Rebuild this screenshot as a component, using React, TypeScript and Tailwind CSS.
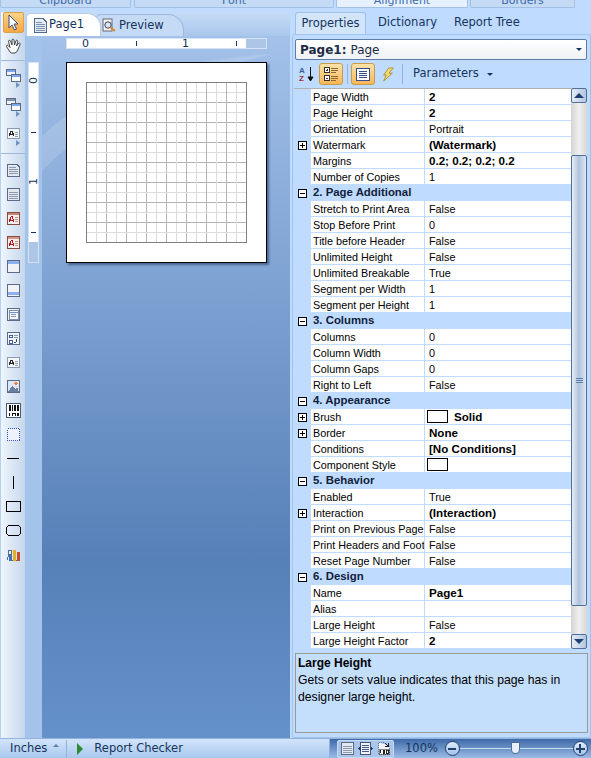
import React from 'react';

type Row =
  | { group: string }
  | { name: string; value?: string; bold?: boolean; plus?: boolean; swatch?: boolean };

const rows: Row[] = [
  { name: 'Page Width', value: '2', bold: true },
  { name: 'Page Height', value: '2', bold: true },
  { name: 'Orientation', value: 'Portrait' },
  { name: 'Watermark', value: '(Watermark)', bold: true, plus: true },
  { name: 'Margins', value: '0.2; 0.2; 0.2; 0.2', bold: true },
  { name: 'Number of Copies', value: '1' },
  { group: '2. Page Additional' },
  { name: 'Stretch to Print Area', value: 'False' },
  { name: 'Stop Before Print', value: '0' },
  { name: 'Title before Header', value: 'False' },
  { name: 'Unlimited Height', value: 'False' },
  { name: 'Unlimited Breakable', value: 'True' },
  { name: 'Segment per Width', value: '1' },
  { name: 'Segment per Height', value: '1' },
  { group: '3. Columns' },
  { name: 'Columns', value: '0' },
  { name: 'Column Width', value: '0' },
  { name: 'Column Gaps', value: '0' },
  { name: 'Right to Left', value: 'False' },
  { group: '4. Appearance' },
  { name: 'Brush', value: 'Solid', bold: true, plus: true, swatch: true },
  { name: 'Border', value: 'None', bold: true, plus: true },
  { name: 'Conditions', value: '[No Conditions]', bold: true },
  { name: 'Component Style', swatch: true },
  { group: '5. Behavior' },
  { name: 'Enabled', value: 'True' },
  { name: 'Interaction', value: '(Interaction)', bold: true, plus: true },
  { name: 'Print on Previous Page', value: 'False' },
  { name: 'Print Headers and Foot', value: 'False' },
  { name: 'Reset Page Number', value: 'False' },
  { group: '6. Design' },
  { name: 'Name', value: 'Page1', bold: true },
  { name: 'Alias' },
  { name: 'Large Height', value: 'False' },
  { name: 'Large Height Factor', value: '2', bold: true },
];

function Box({ minus }: { minus?: boolean }) {
  return (
    <svg width="9" height="9" viewBox="0 0 9 9" shapeRendering="crispEdges">
      <rect x="0.5" y="0.5" width="8" height="8" fill="#fff" stroke="#000" />
      <path d={minus ? 'M2 4.5H7' : 'M2 4.5H7M4.5 2V7'} stroke="#000" />
    </svg>
  );
}

function DocIcon({ kind }: { kind: string }) {
  const frame = '#5a6c88';
  return (
    <svg width="15" height="15" viewBox="0 0 15 15" shapeRendering="crispEdges">
      {kind === 'page' && (
        <>
          <path d="M1.5 1.5H11L13.5 4V13.5H1.5Z" fill="#e4e8ee" stroke={frame} />
          <path d="M3 4H10M3 6H12M3 8H12M3 10H12" stroke="#8b9bb2" />
        </>
      )}
      {kind === 'lines' && (
        <>
          <rect x="1.5" y="1.5" width="12" height="12" fill="#e4e8ee" stroke={frame} />
          <path d="M3 5H12M3 7H12M3 9H12M3 11H12" stroke="#8b9bb2" />
        </>
      )}
      {(kind === 'red' || kind === 'red2') && (
        <>
          <rect x="1.5" y="1.5" width="12" height="12" fill="#f6eeee" stroke="#8a4a40" />
          <rect x="2" y="2" width="11" height="2" fill={kind === 'red' ? '#c08a78' : '#d09a88'} />
          <path d="M3 11L5.5 5H6L8 11M4 9H7" stroke="#b01818" fill="none" />
          <path d="M9 6H12M9 8H12M9 10H12" stroke="#c09090" />
        </>
      )}
      {kind === 'top' && (
        <>
          <rect x="1.5" y="1.5" width="12" height="12" fill="#f0f2f6" stroke={frame} />
          <rect x="2" y="2" width="11" height="3" fill="#8fb0f0" />
        </>
      )}
      {kind === 'bottom' && (
        <>
          <rect x="1.5" y="1.5" width="12" height="12" fill="#f0f2f6" stroke={frame} />
          <rect x="2" y="9" width="11" height="3" fill="#8fb0f0" />
        </>
      )}
      {kind === 'panel' && (
        <>
          <rect x="1.5" y="1.5" width="12" height="12" fill="#eef2f8" stroke={frame} />
          <rect x="3" y="3" width="9" height="9" fill="#f6f8fc" stroke="#7f92ae" />
          <path d="M3 5H12" stroke="#6f8fd0" />
          <path d="M5 7H10M5 9H10" stroke="#8b9bb2" />
        </>
      )}
      {kind === 'sub' && (
        <>
          <rect x="1.5" y="1.5" width="12" height="12" fill="#eef2f8" stroke={frame} />
          <path d="M3 4H6V6H3ZM3 9H6V12H3Z" fill="#fff" stroke="#3f5f8f" />
          <path d="M8 4H12M8 6H12" stroke="#8b9bb2" />
          <path d="M8 11H10L11 8" stroke="#2f4f7f" fill="none" />
        </>
      )}
      {kind === 'text' && (
        <>
          <rect x="1.5" y="2.5" width="12" height="10" fill="#f3f5f8" stroke="#8b9bb2" />
          <path d="M3 10L5 5H6L8 10M4 8.5H7" stroke="#2a2a2a" fill="none" />
          <path d="M9 6H12M9 8H12M9 10H12" stroke="#8b9bb2" />
        </>
      )}
      {kind === 'image' && (
        <>
          <rect x="1.5" y="1.5" width="12" height="12" fill="#dce6f4" stroke={frame} />
          <path d="M2 13L6 7L9 10L11 8L13 13Z" fill="#6a7f9f" />
          <circle cx="10" cy="4.5" r="1.8" fill="#f08040" />
        </>
      )}
      {kind === 'barcode' && (
        <>
          <rect x="0.5" y="0.5" width="14" height="14" fill="#fff" stroke="#4a5a78" />
          <path d="M3 2V8M4 2V8M6 2V8M8 2V8M9 2V8M11 2V8M12 2V8" stroke="#111" />
          <path d="M3 10V13M6 10V13M7 10H9V13M11 10V13M12 10V13" stroke="#111" fill="none" />
        </>
      )}
      {kind === 'dash' && (
        <rect x="1.5" y="1.5" width="12" height="12" fill="#eef2fa" stroke="#3a50c8" strokeDasharray="1 1" />
      )}
      {kind === 'hline' && <path d="M1 7.5H13" stroke="#000" />}
      {kind === 'vline' && <path d="M7.5 1V14" stroke="#000" />}
      {kind === 'rect' && <rect x="0.5" y="2.5" width="14" height="10" fill="none" stroke="#000" />}
      {kind === 'round' && <path d="M2.5 2.5H12.5L14.5 4.5V10.5L12.5 12.5H2.5L0.5 10.5V4.5Z" fill="none" stroke="#000" />}
      {kind === 'chart' && (
        <>
          <path d="M1.5 13.5L3 3H5V13.5H14" fill="#e8eef6" stroke="#5a6c88" />
          <rect x="3" y="7" width="3" height="7" fill="#3f6fc0" />
          <rect x="7" y="3" width="3" height="11" fill="#e0b020" />
          <rect x="11" y="5" width="3" height="9" fill="#c84a28" />
        </>
      )}
      {kind === 'wide' && (
        <>
          <rect x="2.5" y="1.5" width="10" height="12" fill="#eef2f8" stroke="#44597c" />
          <path d="M4 4H11M4 6H11M4 8H11M4 10H11" stroke="#44597c" />
          <path d="M0 7.5L2.500 5V10ZM15 7.500L12.500 5V10Z" fill="#1f3f70" />
        </>
      )}
      {kind === 'zoom100' && (
        <>
          <path d="M2.5 1.500H9M13.500 5V13.500H2.500V1.500" fill="#eef2f8" stroke="#6a7a94" strokeDasharray="1 1" />
          <rect x="3" y="8" width="10" height="5" fill="#fff" stroke="#333" strokeWidth="0.6" />
          <path d="M4.500 9V12M7 9H8.500V12H7ZM10.500 9H12V12H10.500Z" stroke="#222" fill="none" />
          <path d="M9 2L12 5M12 2V5H9" stroke="#222" fill="none" />
        </>
      )}
    </svg>
  );
}

function Stack({ top, bottom }: { top: string; bottom: string }) {
  return (
    <svg width="15" height="15" viewBox="0 0 15 15" shapeRendering="crispEdges">
      <rect x="0.5" y="1.5" width="9" height="6" fill="#f0f4fa" stroke="#5a6c88" />
      <rect x="1" y="2" width="8" height="2" fill={top} />
      <rect x="5.5" y="6.5" width="9" height="7" fill="#fff" stroke="#5a6c88" />
      <rect x="6" y="7" width="8" height="2" fill={bottom} />
    </svg>
  );
}

function ToolSlot({ kind }: { kind: string }) {
  return (
    <div className="h-[24px] flex items-center justify-center">
      <DocIcon kind={kind} />
    </div>
  );
}

function LeftToolbar() {
  const tools = ['page', 'lines', 'red', 'red2', 'top', 'bottom', 'panel', 'sub', 'text', 'image', 'barcode', 'dash', 'hline', 'vline', 'rect', 'round', 'chart'];
  return (
    <div className="w-[25px] shrink-0 border-l border-[#b5d0f2] bg-gradient-to-r from-[#eef5fd] to-[#c6d7ec] flex flex-col">
      <div className="mx-auto w-[21px] h-[21px] rounded-[2px] border border-[#d9a441] bg-gradient-to-b from-[#fbd28a] to-[#f9a63e] flex items-center justify-center">
        <svg width="13" height="17" viewBox="0 0 13 17">
          <path d="M2 1V14L5 11L7.5 16L9.5 15L7 10H11Z" fill="#fff" stroke="#34507c" />
        </svg>
      </div>
      <div className="h-[26px] flex items-center justify-center">
        <svg width="17" height="16" viewBox="0 0 17 16" fill="#fff" stroke="#333" strokeWidth="0.9">
          <path d="M5 14L1.5 8.5C1 7.500 2.500 6.500 3.500 8L5 9.500L3.500 3.500C3.300 2.200 5 1.800 5.500 3L7 7L7 2C7 .8 8.800 .8 9 2L9.500 7L11 2.700C11.400 1.700 13 2.200 12.700 3.500L11.500 8L13.500 5.500C14.500 4.500 15.700 5.500 15 6.700L12 13.500L10 15H6.500Z" />
        </svg>
      </div>
      <div className="mt-[1px] h-px bg-[#9db8d8]" />
      {[
        ['#7fa4ee', '#7fa4ee'],
        ['#7f92ae', '#7fa4ee'],
        ['#5a6c88', '#dfe6f0'],
      ].map(([a, b], i) => (
        <div key={i} className="h-[29px] flex flex-col items-center pt-[7px]">
          {i === 2 ? <DocIcon kind="text" /> : <Stack top={a} bottom={b} />}
          <span className="ml-[9px] mt-[-1px] w-0 h-0 border-y-[3px] border-y-transparent border-l-[4px] border-l-[#6f94c4]" />
        </div>
      ))}
      <div className="mt-[5px] mb-[4px] h-px bg-[#9db8d8]" />
      {tools.map((t) => (
        <ToolSlot key={t} kind={t} />
      ))}
    </div>
  );
}

function TabBar() {
  return (
    <div className="h-[24px] flex items-end pl-[1px] bg-gradient-to-b from-[#c6dcf6] to-[#a9c6ec]">
      <div className="relative z-10 w-[75px] h-[23px] bg-white rounded-tl-[5px] rounded-tr-[14px] border border-b-0 border-[#b5cde9] flex items-center pl-[7px] gap-[2px]">
        <svg width="13" height="15" viewBox="0 0 13 15" shapeRendering="crispEdges">
          <path d="M.5 .5H9L12.500 4V14.500H.5Z" fill="#e8edf4" stroke="#4a6a90" />
          <path d="M2 4H8M2 6H11M2 8H11M2 10H11M2 12H11" stroke="#7a90ae" />
        </svg>
        <span className="text-[11.5px] text-[#15345c] font-['DejaVu_Sans',sans-serif]">Page1</span>
      </div>
      <div className="ml-[-5px] w-[88px] h-[22px] bg-[#c5daf4] rounded-tl-[5px] rounded-tr-[16px] border border-b-0 border-[#9db9dd] flex items-center pl-[5px] gap-[2px]">
        <svg width="15" height="15" viewBox="0 0 15 15">
          <rect x="1" y="1" width="9" height="12" fill="#f3f3ef" stroke="#667" />
          <circle cx="6" cy="7" r="3.200" fill="#d6e6f4" stroke="#445" />
          <path d="M8.500 9.500L13 13" stroke="#d98a2b" strokeWidth="2" />
        </svg>
        <span className="text-[11.5px] text-[#15345c] font-['DejaVu_Sans',sans-serif]">Preview</span>
      </div>
    </div>
  );
}

function HRuler() {
  return (
    <div className="ml-[24px] mt-[2px] w-[201px] h-[11px] border border-[#d5e3f5] bg-[#adc6e8] flex">
      <div className="w-[179px] bg-white relative flex items-center text-[11px] leading-none text-[#15345c] font-['DejaVu_Sans',sans-serif]">
        <span className="absolute left-[15px]">0</span>
        <span className="absolute left-[69px] w-px h-[5px] bg-[#15345c]" />
        <span className="absolute left-[115px]">1</span>
        <span className="absolute left-[169px] w-px h-[5px] bg-[#15345c]" />
      </div>
    </div>
  );
}

function VRuler() {
  return (
    <div className="w-[11px] h-[201px] ml-[3px] mt-[26px] border border-[#d5e3f5] bg-[#adc6e8] shrink-0">
      <div className="h-[179px] bg-white relative text-[11px] leading-none text-[#15345c] font-['DejaVu_Sans',sans-serif]">
        <span className="absolute left-[1px] top-[12px] -rotate-90">0</span>
        <span className="absolute left-[2px] top-[69px] h-px w-[5px] bg-[#15345c]" />
        <span className="absolute left-[1px] top-[113px] -rotate-90">1</span>
        <span className="absolute left-[2px] top-[169px] h-px w-[5px] bg-[#15345c]" />
      </div>
    </div>
  );
}

function PageSheet() {
  const lines = Array.from({ length: 17 }, (_, i) => i);
  return (
    <div className="w-[201px] h-[201px] bg-white border border-black p-[19px] shadow-[2px_2px_2px_rgba(30,50,90,0.55)] shrink-0">
      <svg width="161" height="161" viewBox="0 0 161 161" shapeRendering="crispEdges">
        {lines.map((i) => {
          const major = i % 2 === 0;
          const p = i * 10 + 0.5;
          return (
            <g key={i} stroke={major ? '#b4b4b4' : '#dcdcdc'}>
              <path d={`M${p} 0V161`} />
              <path d={`M0 ${p}H161`} />
            </g>
          );
        })}
        <rect x="0.5" y="0.5" width="160" height="160" fill="none" stroke="#808080" />
      </svg>
    </div>
  );
}

function DesignerPane() {
  return (
    <div className="w-[290px] shrink-0 flex min-h-0">
      <LeftToolbar />
      <div className="flex-1 flex flex-col min-w-0 bg-[#a4c3ea]">
        <TabBar />
        <div className="flex-1 flex min-h-0">
          <div className="w-[17px] shrink-0">
            <VRuler />
          </div>
          <div className="relative flex-1 bg-gradient-to-b from-[#a3c1e9] via-[#5680b8] via-75% to-[#6591cb] overflow-hidden">
            <svg className="absolute left-0 top-0" width="248" height="140" viewBox="0 0 248 140">
              <path d="M0 100C60 45 130 25 230 18C150 38 70 65 0 135Z" fill="#fff" fillOpacity="0.14" />
            </svg>
            <div className="relative">
              <HRuler />
              <div className="mt-[13px] ml-[24px] flex">
                <PageSheet />
              </div>
            </div>
          </div>
        </div>
      </div>
    </div>
  );
}

function Scrollbar() {
  const Btn = ({ up }: { up?: boolean }) => (
    <div className="h-[15px] shrink-0 rounded-[2px] border border-[#4e6f9c] bg-gradient-to-r from-[#e4ecf6] to-[#b4c6de] flex items-center justify-center">
      <span className={`w-0 h-0 border-x-[5px] border-x-transparent ${up ? 'border-b-[5px] border-b-[#1f3f70]' : 'border-t-[5px] border-t-[#1f3f70]'}`} />
    </div>
  );
  return (
    <div className="w-[16px] shrink-0 bg-gradient-to-r from-[#d4d4d4] via-[#f0f0f0] to-[#d8d8d8] flex flex-col">
      <Btn up />
      <div className="h-[52px] shrink-0" />
      <div className="h-[451px] shrink-0 border border-[#4e6f9c] rounded-[2px] bg-gradient-to-r from-[#e6eef8] via-[#b0c2da] to-[#dfe8f4] flex items-center justify-center">
        <span className="w-[7px] h-[5px] border-y border-y-[#5f7fa8] bg-[linear-gradient(#5f7fa8,#5f7fa8)] bg-[length:100%_1px] bg-center bg-no-repeat" />
      </div>
      <div className="flex-1" />
      <Btn />
    </div>
  );
}

function PropGrid() {
  return (
    <div className="ml-[1px] mr-[3px] flex h-[561px] shrink-0 text-[10.8px] text-black font-['Liberation_Sans',sans-serif] overflow-hidden">
      <div className="flex-1 min-w-0 bg-[#bfdbff] border-t border-[#b0b0b0]">
        {rows.map((r, i) =>
          'group' in r ? (
            <div key={i} className="h-[16px] flex items-center">
              <div className="w-[17px] shrink-0 flex items-center justify-center">
                <Box minus />
              </div>
              <span className="pl-[2px] font-bold text-[11.4px] text-[#10203a]">{r.group}</span>
            </div>
          ) : (
            <div key={i} className="h-[16px] flex items-stretch">
              <div className="w-[17px] shrink-0 flex items-center justify-center">{r.plus && <Box />}</div>
              <div className="w-[113px] shrink-0 bg-white pl-[2px] overflow-hidden whitespace-nowrap leading-[16px] border-b border-[#bfdbff]">
                {r.name}
              </div>
              <div className={`flex-1 ml-px bg-white pl-[4px] flex items-center gap-[6px] leading-[16px] border-b border-[#bfdbff] ${r.bold ? 'font-bold text-[11.6px]' : ''}`}>
                {r.swatch && <span className="ml-[-2px] w-[21px] h-[13px] bg-white border border-black shrink-0" />}
                {r.value}
              </div>
            </div>
          ),
        )}
      </div>
      <Scrollbar />
    </div>
  );
}

function PropertiesPane() {
  return (
    <div className="flex-1 min-w-0 flex flex-col pl-[2px]">
      <div className="h-[22px] flex items-end pl-[3px] text-[11.5px] text-[#15345c] font-['DejaVu_Sans',sans-serif]">
        <div className="w-[71px] h-[22px] bg-[#d3e5fb] rounded-t-[3px] border border-b-0 border-[#9ebfe6] flex items-center justify-center">
          Properties
        </div>
        <div className="ml-[12px] h-[22px] flex items-center">Dictionary</div>
        <div className="ml-[17px] h-[22px] flex items-center">Report Tree</div>
      </div>
      <div className="flex-1 min-h-0 bg-[#bfdbff] border border-[#a3c4ea] rounded-[2px] flex flex-col">
        <div className="ml-[2px] mr-[3px] mt-[4px] h-[21px] shrink-0 rounded-[2px] border border-[#5e7ea8] bg-gradient-to-b from-white to-[#eef1f5] flex items-center px-[4px] text-[12px] text-[#1c2c44] font-['DejaVu_Sans',sans-serif]">
          <span className="font-bold">Page1:</span>
          <span className="ml-[4px]">Page</span>
          <span className="ml-auto w-0 h-0 border-x-[3px] border-x-transparent border-t-[3px] border-t-[#15345c]" />
        </div>
        <div className="h-[28px] shrink-0 flex items-center pl-[5px] gap-[2px]">
          <svg width="18" height="18" viewBox="0 0 18 18">
            <text x="1" y="8" fontSize="8" fontWeight="700" fill="#3c5c9c" fontFamily="Liberation Sans">A</text>
            <text x="1" y="16" fontSize="8" fontWeight="700" fill="#a03030" fontFamily="Liberation Sans">Z</text>
            <path d="M12.500 2V15M10 12L12.500 16L15 12Z" stroke="#111" fill="#111" />
          </svg>
          <span className="ml-[1px] w-[24px] h-[22px] rounded-[3px] border border-[#c69c4c] bg-gradient-to-b from-[#fde2a8] to-[#f8b555] flex items-center justify-center">
            <svg width="17" height="16" viewBox="0 0 17 16" shapeRendering="crispEdges">
              <rect x="1.500" y="1.500" width="5" height="5" fill="#fff" stroke="#333" />
              <path d="M3 4H5M4 3V5" stroke="#333" />
              <rect x="1.500" y="9.500" width="5" height="5" fill="#fff" stroke="#333" />
              <path d="M3 12H5" stroke="#333" />
              <path d="M8 2H15M8 4H15M8 6H13M8 10H15M8 12H15M8 14H13" stroke="#8a6a30" />
            </svg>
          </span>
          <span className="ml-[2px] mr-[1px] w-px h-[20px] bg-[#92b3de]" />
          <span className="w-[24px] h-[22px] rounded-[3px] border border-[#c69c4c] bg-gradient-to-b from-[#fde2a8] to-[#f8b555] flex items-center justify-center">
            <svg width="14" height="13" viewBox="0 0 14 13" shapeRendering="crispEdges">
              <rect x="0.500" y="0.500" width="13" height="12" fill="#fff" stroke="#33508a" />
              <path d="M3 3H11M3 5H11M3 7H11M3 9H11" stroke="#33508a" />
            </svg>
          </span>
          <svg className="ml-[4px]" width="14" height="15" viewBox="0 0 16 17">
            <path d="M9 1H14L9 7H13L3 16L6 9H3Z" fill="#f6dc6e" stroke="#a88a30" />
          </svg>
          <span className="ml-[5px] w-px h-[20px] bg-[#92b3de]" />
          <span className="ml-[8px] text-[11.5px] text-[#15345c] font-['DejaVu_Sans',sans-serif]">Parameters</span>
          <span className="ml-[6px] w-0 h-0 border-x-[3px] border-x-transparent border-t-[3px] border-t-[#15345c]" />
        </div>
        <PropGrid />
        <div className="ml-[2px] mr-[2px] mt-[4px] h-[80px] shrink-0 border border-[#9a9a9a] bg-[#c4dffc] px-[2px] pt-[1px] text-[12.2px] leading-[17px] text-black font-['Liberation_Sans',sans-serif]">
          <div className="font-bold text-[12px]">Large Height</div>
          <div>Gets or sets value indicates that this page has in designer large height.</div>
        </div>
      </div>
    </div>
  );
}

function StatusBar() {
  return (
    <div className="h-[20px] shrink-0 flex items-center border-t border-[#92b3de] bg-gradient-to-b from-[#d2e4fa] to-[#a9c8ee] text-[11.5px] text-[#15345c] font-['DejaVu_Sans',sans-serif]">
      <span className="ml-[10px]">Inches</span>
      <span className="ml-[6px] mb-[6px] w-0 h-0 border-x-[3px] border-x-transparent border-b-[3px] border-b-[#5f7fa8]" />
      <span className="ml-[7px] w-px h-[18px] bg-[#92b3de]" />
      <span className="ml-[10px] w-0 h-0 border-y-[6px] border-y-transparent border-l-[6px] border-l-[#2f8a2f]" />
      <span className="ml-[11px]">Report Checker</span>
      <div className="ml-auto h-full w-[262px] flex items-center bg-gradient-to-b from-[#3e6aa8] to-[#9cbce6] border-l border-[#92b3de]">
        <div className="ml-[7px] h-[18px] w-[57px] flex items-center justify-around rounded-[2px] border border-[#c6dbf5] bg-[#a9c6ea]">
          <DocIcon kind="lines" />
          <DocIcon kind="wide" />
          <DocIcon kind="zoom100" />
        </div>
        <span className="ml-[11px] text-[#123462]">100%</span>
        <span className="ml-[7px] w-[15px] h-[15px] shrink-0 rounded-full border border-[#24406c] bg-gradient-to-b from-[#e2eefc] to-[#9fc0e8] flex items-center justify-center">
          <span className="w-[8px] h-[2px] bg-[#24406c]" />
        </span>
        <span className="relative w-[113px] shrink-0 h-px bg-[#c6dbf5]">
          <span className="absolute left-[51px] top-[-6px] w-[9px] h-[12px] bg-[#e6effb] border border-[#4a6a98] rounded-b-[4px]" />
        </span>
        <span className="w-[15px] h-[15px] shrink-0 rounded-full border border-[#24406c] bg-gradient-to-b from-[#e2eefc] to-[#9fc0e8] flex items-center justify-center relative">
          <span className="w-[9px] h-[2px] bg-[#24406c]" />
          <span className="absolute w-[2px] h-[9px] bg-[#24406c]" />
        </span>
      </div>
    </div>
  );
}

export default function App() {
  return (
    <div className="w-[591px] h-[758px] overflow-hidden flex flex-col bg-[#bfdbff]">
      <div className="h-[12px] shrink-0 flex text-[11px] text-[#3e6aaa] font-['DejaVu_Sans',sans-serif] leading-none overflow-hidden">
        {[
          ['Clipboard', 'w-[131px]'],
          ['Font', 'w-[200px] ml-[3px]'],
          ['Alignment', 'w-[132px] ml-[2px] bg-white/60'],
          ['Borders', 'w-[105px] ml-[2px]'],
        ].map(([label, cls]) => (
          <div key={label} className={`${cls} h-[8px] bg-[#c5daf4] border border-t-0 border-[#a3c0e4] rounded-b-[2px] flex justify-center items-end overflow-hidden`}>
            <span className="pb-[1px]">{label}</span>
          </div>
        ))}
      </div>
      <div className="flex-1 flex min-h-0">
        <DesignerPane />
        <PropertiesPane />
      </div>
      <StatusBar />
    </div>
  );
}
